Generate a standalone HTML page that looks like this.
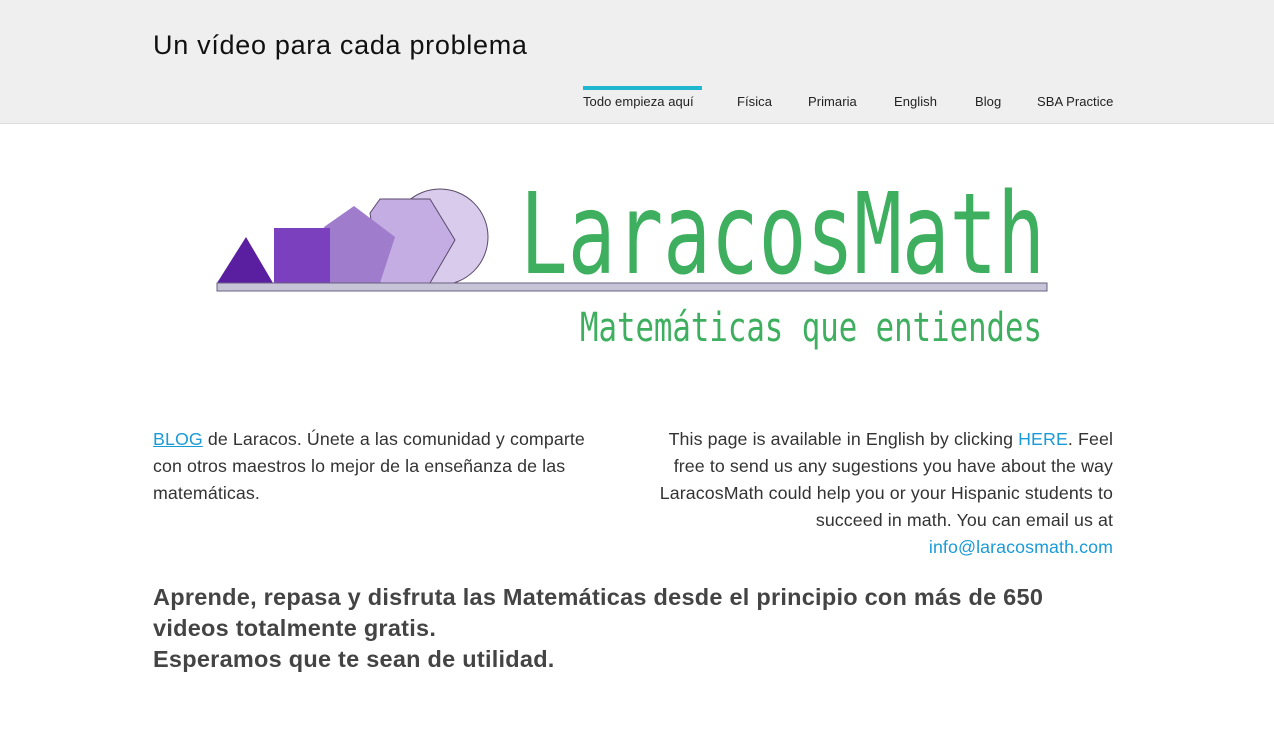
<!DOCTYPE html>
<html><head><meta charset="utf-8"><style>
body{margin:0;background:#fff;font-family:"Liberation Sans",Arial,sans-serif;width:1274px;height:734px;overflow:hidden}
.hdr{position:absolute;left:0;top:0;width:1274px;height:123px;background:#efefef;border-bottom:1px solid #ddd}
.title{position:absolute;left:153px;top:30px;font-size:27px;color:#111;letter-spacing:0.7px}
.nav span{position:absolute;white-space:nowrap;top:94px;font-size:13px;color:#222;letter-spacing:0.05px}
.bar{position:absolute;left:583px;top:86px;width:119px;height:4px;background:#1fb6d0}
.p{position:absolute;font-size:17.8px;line-height:27px;color:#333;white-space:nowrap;letter-spacing:0.1px}
a{color:#1a9bd7}
.big{position:absolute;left:153px;top:582px;font-size:23.5px;font-weight:bold;color:#444;line-height:31px;white-space:nowrap;letter-spacing:0.25px}
</style></head><body>
<div class="hdr">
<div class="title">Un vídeo para cada problema</div>
<div class="bar"></div>
<div class="nav">
<span style="left:583px">Todo empieza aquí</span>
<span style="left:737px">Física</span>
<span style="left:808px">Primaria</span>
<span style="left:894px">English</span>
<span style="left:975px">Blog</span>
<span style="left:1037px">SBA Practice</span>
</div></div>
<svg style="position:absolute;left:0;top:0" width="1274" height="400">
<circle cx="440" cy="237" r="48" fill="#d8cbec" stroke="#5a4a6a" stroke-width="1"/>
<polygon points="380,199 430,199 455,240 430,283 380,283 370,213" fill="#c3ade2" stroke="#5a4a6a" stroke-width="1"/>
<polygon points="354,206 395,237 380,283 330,283 324,227" fill="#a07ccc"/>
<rect x="274" y="228" width="56" height="55" fill="#7a40bd"/>
<polygon points="246,237 273,283 217,283" fill="#5a1ea0"/>
<rect x="217" y="283" width="830" height="8" fill="#c8c4d8" stroke="#6a6080" stroke-width="1"/>
<text x="520" y="273" font-family="DejaVu Sans Mono,monospace" font-size="112" fill="#3daf5e" textLength="525" lengthAdjust="spacingAndGlyphs">LaracosMath</text>
<text x="580" y="341" font-family="DejaVu Sans Mono,monospace" font-size="40" fill="#3daf5e" textLength="462" lengthAdjust="spacingAndGlyphs">Matemáticas que entiendes</text>
</svg>
<div class="p" style="left:153px;top:426px"><a href="#">BLOG</a> de Laracos. Únete a las comunidad y comparte<br>con otros maestros lo mejor de la enseñanza de las<br>matemáticas.</div>
<div class="p" style="right:161px;top:426px;text-align:right">This page is available in English by clicking <a href="#" style="text-decoration:none">HERE</a>. Feel<br>free to send us any sugestions you have about the way<br>LaracosMath could help you or your Hispanic students to<br>succeed in math. You can email us at<br><a href="#" style="text-decoration:none">info@laracosmath.com</a></div>
<div class="big">Aprende, repasa y disfruta las Matemáticas desde el principio con más de 650<br>videos totalmente gratis.<br>Esperamos que te sean de utilidad.</div>
</body></html>
